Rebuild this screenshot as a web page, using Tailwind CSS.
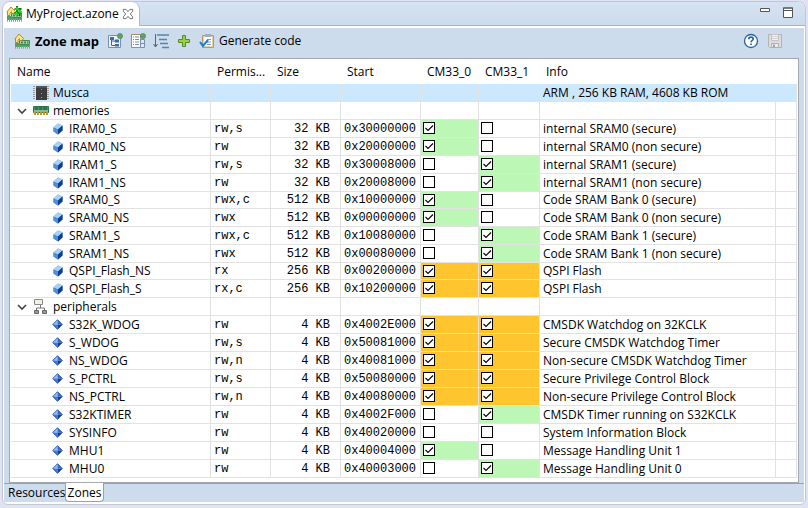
<!DOCTYPE html>
<html lang="en">
<head>
<meta charset="utf-8">
<title>MyProject.azone</title>
<script src="https://cdn.jsdelivr.net/npm/@tailwindcss/browser@4"></script>
</head>
<body class="h-screen overflow-hidden bg-[#dfe3f3] px-[2px] pt-px pb-[3px] font-['Open_Sans','Noto_Sans',sans-serif] text-[12px] leading-[16px] text-black">

<svg class="hidden" aria-hidden="true">
  <symbol id="chip-up" viewBox="0 0 16 16">
    <path d="M5.500 7.500h10v4h-10z" fill="#a9cfae" stroke="#3e8a50"/>
    <path d="M7 8.500h2v2H7zM10 8.500h2v2h-2zM13 8.500h1.500v2H13z" fill="#3f8f58"/>
    <path d="M1 10h5l1 2h9v2H1z" fill="#4e9f62"/>
    <path d="M1 14.500h15" stroke="#c29a2c" stroke-width="2.400" stroke-dasharray="1 1"/>
    <path d="M1.500 9.500V6H.8L5 1l4.500 4.500L8 7.500H5.500v-2L4 7.500v2z" fill="#f8e48c" stroke="#b88a1e"/>
  </symbol>
  <symbol id="musca" viewBox="0 0 16 16">
    <path d="M1 1v14M15 1v14" stroke="#999" stroke-width="2" stroke-dasharray="1 1"/>
    <path d="M3 1h11v14H3z" fill="#3d3d3d"/><path d="M3 1h11v2H3z" fill="#555"/>
    <path d="M8 4h1v1H8zM8 8h1v1H8zM8 12h1v1H8z" fill="#999"/>
  </symbol>
  <symbol id="memories" viewBox="0 0 16 16">
    <path d="M.5 3.500h15v6H.5z" fill="#3f9d6a" stroke="#207a49"/>
    <path d="M2 4h3v3H2zM6 4h3v3H6zM10 4h4v3h-4z" fill="#555e5a"/>
    <path d="M1 8h14" stroke="#b9dfc6"/>
    <path d="M1 10.500h14" stroke="#bd972e" stroke-width="3" stroke-dasharray="2 1"/>
  </symbol>
  <symbol id="peripherals" viewBox="0 0 16 16">
    <path d="M1.500 .5h8v5h-8z" fill="#f1f1e4" stroke="#8b8b86"/>
    <path d="M7.500 6v3M3.500 12V9h8v3" fill="none" stroke="#777"/>
    <path d="M1.500 11.500h4v3h-4zM9.500 11.500h4v3h-4z" fill="#999" stroke="#666"/>
  </symbol>
  <symbol id="mem" viewBox="0 0 10 12">
    <path d="M.5 4.500L5 .5l4.500 2v5L5 11.500.5 8.500z" fill="#3c78c8"/>
    <path d="M.5 4.500L5 .5l4.500 2L5 6.500z" fill="#a4d3f6"/>
    <path d="M.5 4.500l4.500 2v5l-4.500-3z" fill="#4f8fd6"/>
    <path d="M5 6.500l4.500-4v5L5 11.500z" fill="#103c93"/>
  </symbol>
  <symbol id="per" viewBox="0 0 11 11">
    <path d="M5.500 .5l-5 5h5z" fill="#8dbcf2"/><path d="M5.500 .5v5h5z" fill="#3a6bcb"/>
    <path d="M.5 5.500l5 5v-5z" fill="#4378d6"/><path d="M5.500 10.500v-5h5z" fill="#143a96"/>
    <path d="M5.500 .7L.7 5.500l4.800 4.800 4.800-4.800z" fill="none" stroke="#1e4ca8" stroke-width=".8"/>
  </symbol>
  <symbol id="chev" viewBox="0 0 10 10"><path d="M1 3l4 4 4-4" fill="none" stroke="#444" stroke-width="1.600"/></symbol>
  <symbol id="check" viewBox="0 0 12 12"><path d="M2.500 6l2.500 2.500 5-5" fill="none" stroke="#000" stroke-width="1.100"/></symbol>
</svg>

<main class="flex h-full flex-col rounded-t-lg rounded-b-md border border-[#c3c7d2] bg-white">
  <header class="flex h-[24px] shrink-0 items-stretch rounded-t-lg border-b border-[#adb2c4] bg-linear-to-b from-[#d5e2f1] to-[#ccdcec]">
    <div class="-mb-px flex w-[137px] items-center rounded-t-lg border-r border-[#b4b8c6] bg-white pl-[3px]">
      <svg class="mr-[4px] size-4 shrink-0" viewBox="0 0 16 16" aria-hidden="true"><use href="#chip-up"/><path d="M11 0v10M8.500 3h7M8.500 7h7M13.500 2v8" stroke="#0f6a0f" stroke-width="1.800"/><path d="M11 1v3M9 3h4M14 3.500v4M12 5.500h4M10.500 6v4M8.500 8h4" stroke="#25e025" stroke-width="1.500"/></svg>
      <span class="whitespace-nowrap">MyProject.azone</span>
      <button class="ml-auto mr-[5px]" aria-label="Close"><svg class="size-[12px]" viewBox="0 0 13 13"><path d="M1.500 1.500h3l2 2.500 2-2.500h3v2L9 6.500l2.500 3v2h-3l-2-2.500-2 2.500h-3v-2l2.500-3-2.500-3z" fill="#fff" stroke="#6a6a6a"/></svg></button>
    </div>
    <div class="ml-auto flex gap-[13px] pt-[5px] pr-[12px]">
      <button class="self-start" aria-label="Minimize"><svg class="block h-[11px] w-[10px]" viewBox="0 0 10 11"><path d="M.5 1.500h9v3h-9z" fill="#fff" stroke="#555"/></svg></button>
      <button class="self-start" aria-label="Maximize"><svg class="block h-[11px] w-[10px]" viewBox="0 0 10 11"><path d="M.5 1h9v9.500h-9z" fill="#fff" stroke="#555"/><path d="M0 1h10M0 3.500h10" stroke="#555"/></svg></button>
    </div>
  </header>

  <section class="mx-px my-[2px] flex min-h-0 flex-1 flex-col bg-[#cddcec]">
    <div class="flex h-[30px] shrink-0 items-center pr-[18px] pb-[4px] pl-[10px]">
      <svg class="mr-[5px] size-4" viewBox="0 0 16 16" aria-hidden="true"><use href="#chip-up"/></svg>
      <h1 class="mr-[8px] font-bold text-[13px]">Zone map</h1>
      <div class="flex items-center gap-[7px]">
        <button aria-label="Show as tree"><svg class="block size-4" viewBox="0 0 16 16"><path d="M1.500 2.500h12v12h-12z" fill="#eef4fb" stroke="#7c8fa8"/><path d="M4.500 5v7.500h4M4.500 8h4" fill="none" stroke="#3b679e"/><path d="M3 4h4v3H3zM8 6.500h4v3H8zM8 11h4v2.500H8z" fill="#3f6da8"/><circle cx="13" cy="3" r="2.600" fill="#5ba56a" stroke="#3f8450" stroke-width=".6"/></svg></button>
        <button aria-label="Show columns"><svg class="block size-4" viewBox="0 0 16 16"><path d="M1.500 1.500h9v13h-9z" fill="#fff" stroke="#a08f65"/><path d="M3 4h1M5 4h4M3 6.500h1M5 6.500h4M3 9h1M5 9h4M3 11.500h1M5 11.500h4" stroke="#6b8fbd"/><path d="M10.500 6.500h4v8h-4z" fill="#dde7f2" stroke="#7c8fa8"/><path d="M11 10.500h3" stroke="#7c8fa8"/><circle cx="13" cy="3" r="2.600" fill="#5ba56a" stroke="#3f8450" stroke-width=".6"/></svg></button>
        <button aria-label="Sort"><svg class="block size-4" viewBox="0 0 16 16"><path d="M2.500 1v12M.5 11l2 3 2-3" fill="none" stroke="#5d6470"/><path d="M4 2h12M6 6.500h8M7 10.500h8M9 14.500h7" stroke="#5585ad" stroke-width="1.500"/></svg></button>
        <button aria-label="Add"><svg class="block size-4" viewBox="0 0 16 16"><path d="M6.500 2.500h3v4h4v3h-4v4h-3v-4h-4v-3h4z" fill="#9bd04c" stroke="#548b2a"/></svg></button>
        <button class="flex items-center gap-[4px]"><svg class="block size-4" viewBox="0 0 16 16" aria-hidden="true"><path d="M3.500 2.500h11v12h-11z" fill="#e7cf9e" stroke="#b49a6c"/><path d="M5 4h8v9H5z" fill="#fff"/><path d="M6 1h6v3H6z" fill="#a4afc1"/><path d="M8 6.500h4M8 9h4M8 11.500h4" stroke="#7698c9"/><path d="M1 9l3 4 5-6" fill="none" stroke="#157be0" stroke-width="2"/></svg><span>Generate code</span></button>
      </div>
      <div class="ml-auto flex gap-[8px] pr-[3px]">
        <button aria-label="Help"><svg class="block size-4" viewBox="0 0 16 16"><circle cx="8" cy="8" r="6.500" fill="#fff" stroke="#2b6197" stroke-width="1.300"/><path d="M5.800 6.200c0-3 4.400-2.700 4.400-.3 0 1.500-2.100 1.600-2.100 3.300M8.100 10.500v1.600" fill="none" stroke="#2565a5" stroke-width="1.700"/></svg></button>
        <button aria-label="Save" disabled><svg class="block size-4" viewBox="0 0 16 16"><path d="M1.500 1.500h13v13h-12l-1-1z" fill="#dcdcdc" stroke="#b4b4b4"/><path d="M4.500 1.500h7v6h-7z" fill="#f2f2f2" stroke="#c4c4c4"/><path d="M5 3.500h6M5 5.500h6" stroke="#d2d2d2"/><path d="M4.500 10.500h7v4h-7z" fill="#ececec" stroke="#b0b0b0"/><path d="M6 11.500h2v3H6z" fill="#a4a4a4"/></svg></button>
      </div>
    </div>

    <div class="mx-[5px] min-h-0 flex-1 overflow-hidden border border-[#a3a8b0] bg-white p-px">
      <div class="h-full overflow-hidden">
      <table class="w-full table-fixed border-separate border-spacing-0 whitespace-nowrap">
        <colgroup><col class="w-[200px]"><col class="w-[60px]"><col class="w-[70px]"><col class="w-[80px]"><col class="w-[58px]"><col class="w-[61px]"><col class="w-[236px]"><col></colgroup>
        <thead>
          <tr class="h-[24px] text-left *:border-r *:border-[#e2e2e2] *:p-0 *:pl-[6px] *:font-normal last:*:border-r-0">
            <th>Name</th><th>Permis...</th><th>Size</th><th>Start</th><th>CM33_0</th><th>CM33_1</th><th>Info</th><td></td>
          </tr>
        </thead>
        <tbody id="rows"></tbody>
      </table>
      </div>
    </div>

    <nav class="flex h-[19px] shrink-0 border-t border-[#9a9fa8] pl-[4px]">
      <a href="#resources" class="w-[57px] pt-px">Resources</a>
      <a href="#zones" class="-mt-px w-[39px] rounded-b border border-t-0 border-[#9a9fa8] bg-white pt-[2px] text-center">Zones</a>
    </nav>
  </section>
</main>

<script>
const data = [
  ['g', 'musca', 'Musca', 'ARM , 256 KB RAM, 4608 KB ROM'],
  ['g', 'memories', 'memories', ''],
  ['mem', 'IRAM0_S', 'rw,s', '32 KB', '0x30000000', 'G', '', 'internal SRAM0 (secure)'],
  ['mem', 'IRAM0_NS', 'rw', '32 KB', '0x20000000', 'G', '', 'internal SRAM0 (non secure)'],
  ['mem', 'IRAM1_S', 'rw,s', '32 KB', '0x30008000', '', 'G', 'internal SRAM1 (secure)'],
  ['mem', 'IRAM1_NS', 'rw', '32 KB', '0x20008000', '', 'G', 'internal SRAM1 (non secure)'],
  ['mem', 'SRAM0_S', 'rwx,c', '512 KB', '0x10000000', 'G', '', 'Code SRAM Bank 0 (secure)', 1],
  ['mem', 'SRAM0_NS', 'rwx', '512 KB', '0x00000000', 'G', '', 'Code SRAM Bank 0 (non secure)'],
  ['mem', 'SRAM1_S', 'rwx,c', '512 KB', '0x10080000', '', 'G', 'Code SRAM Bank 1 (secure)'],
  ['mem', 'SRAM1_NS', 'rwx', '512 KB', '0x00080000', '', 'G', 'Code SRAM Bank 1 (non secure)'],
  ['mem', 'QSPI_Flash_NS', 'rx', '256 KB', '0x00200000', 'O', 'O', 'QSPI Flash', 1],
  ['mem', 'QSPI_Flash_S', 'rx,c', '256 KB', '0x10200000', 'O', 'O', 'QSPI Flash'],
  ['g', 'peripherals', 'peripherals', ''],
  ['per', 'S32K_WDOG', 'rw', '4 KB', '0x4002E000', 'O', 'O', 'CMSDK Watchdog on 32KCLK'],
  ['per', 'S_WDOG', 'rw,s', '4 KB', '0x50081000', 'O', 'O', 'Secure CMSDK Watchdog Timer'],
  ['per', 'NS_WDOG', 'rw,n', '4 KB', '0x40081000', 'O', 'O', 'Non-secure CMSDK Watchdog Timer'],
  ['per', 'S_PCTRL', 'rw,s', '4 KB', '0x50080000', 'O', 'O', 'Secure Privilege Control Block'],
  ['per', 'NS_PCTRL', 'rw,n', '4 KB', '0x40080000', 'O', 'O', 'Non-secure Privilege Control Block'],
  ['per', 'S32KTIMER', 'rw', '4 KB', '0x4002F000', '', 'G', 'CMSDK Timer running on S32KCLK'],
  ['per', 'SYSINFO', 'rw', '4 KB', '0x40020000', '', '', 'System Information Block'],
  ['per', 'MHU1', 'rw', '4 KB', '0x40004000', 'G', '', 'Message Handling Unit 1'],
  ['per', 'MHU0', 'rw', '4 KB', '0x40003000', '', 'G', 'Message Handling Unit 0'],
];
const fill = { G: 'bg-[#bdf7b5]', O: 'bg-[#ffc52e]', '': '' };
const rowClass = "*:border-r *:border-b *:border-[#e2e2e2] *:p-0 *:overflow-hidden last:*:border-r-0";
const box = (state, label) => `<td class="${fill[state]}"><div class="relative mb-px ml-[2px] size-[12px]">
  <input type="checkbox" aria-label="${label}" ${state ? 'checked' : ''} class="peer absolute inset-0 size-[12px] appearance-none border border-black bg-white">
  <svg class="pointer-events-none absolute inset-0 hidden size-[12px] peer-checked:block"><use href="#check"/></svg></div></td>`;
const mono = "font-['Liberation_Mono',monospace]";
document.getElementById('rows').innerHTML = data.map(r => {
  if (r[0] === 'g') {
    const sel = r[1] === 'musca';
    return `<tr class="h-[18px] ${sel ? 'bg-[#cce8ff]' : ''} ${rowClass}"><td><div class="flex h-[16px] items-center pl-[6px]">
      ${sel ? '<span class="w-[10px]"></span>' : '<button aria-label="Collapse"><svg class="block size-[10px]"><use href="#chev"/></svg></button>'}
      <svg class="mr-[4px] ml-[6px] size-4"><use href="#${r[1]}"/></svg>${r[2]}</div></td>
      <td></td><td></td><td></td><td></td><td></td><td><div class="h-[16px] pl-[3px]">${r[3]}</div></td><td></td></tr>`;
  }
  const [k, name, perm, size, start, a, b, info, tight] = r;
  const icon = k === 'mem'
    ? '<svg class="mr-[6px] ml-[42px] h-[12px] w-[10px]"><use href="#mem"/></svg>'
    : '<svg class="mr-[6px] ml-[41px] size-[11px]"><use href="#per"/></svg>';
  return `<tr class="${tight ? 'h-[17px]' : 'h-[18px]'} ${rowClass}"><td><div class="flex h-[16px] items-center">${icon}${name}</div></td>
    <td><div class="h-[16px] pl-[3px] ${mono}">${perm}</div></td>
    <td><div class="h-[16px] pr-[10px] text-right ${mono}">${size}</div></td>
    <td><div class="h-[16px] pl-[3px] ${mono}">${start}</div></td>
    ${box(a, name + ' CM33_0')}${box(b, name + ' CM33_1')}
    <td><div class="h-[16px] pl-[3px]">${info}</div></td><td></td></tr>`;
}).join('') + `<tr class="h-[18px] ${rowClass}"><td></td><td></td><td></td><td></td><td></td><td></td><td></td><td></td></tr>`;
</script>
</body>
</html>
